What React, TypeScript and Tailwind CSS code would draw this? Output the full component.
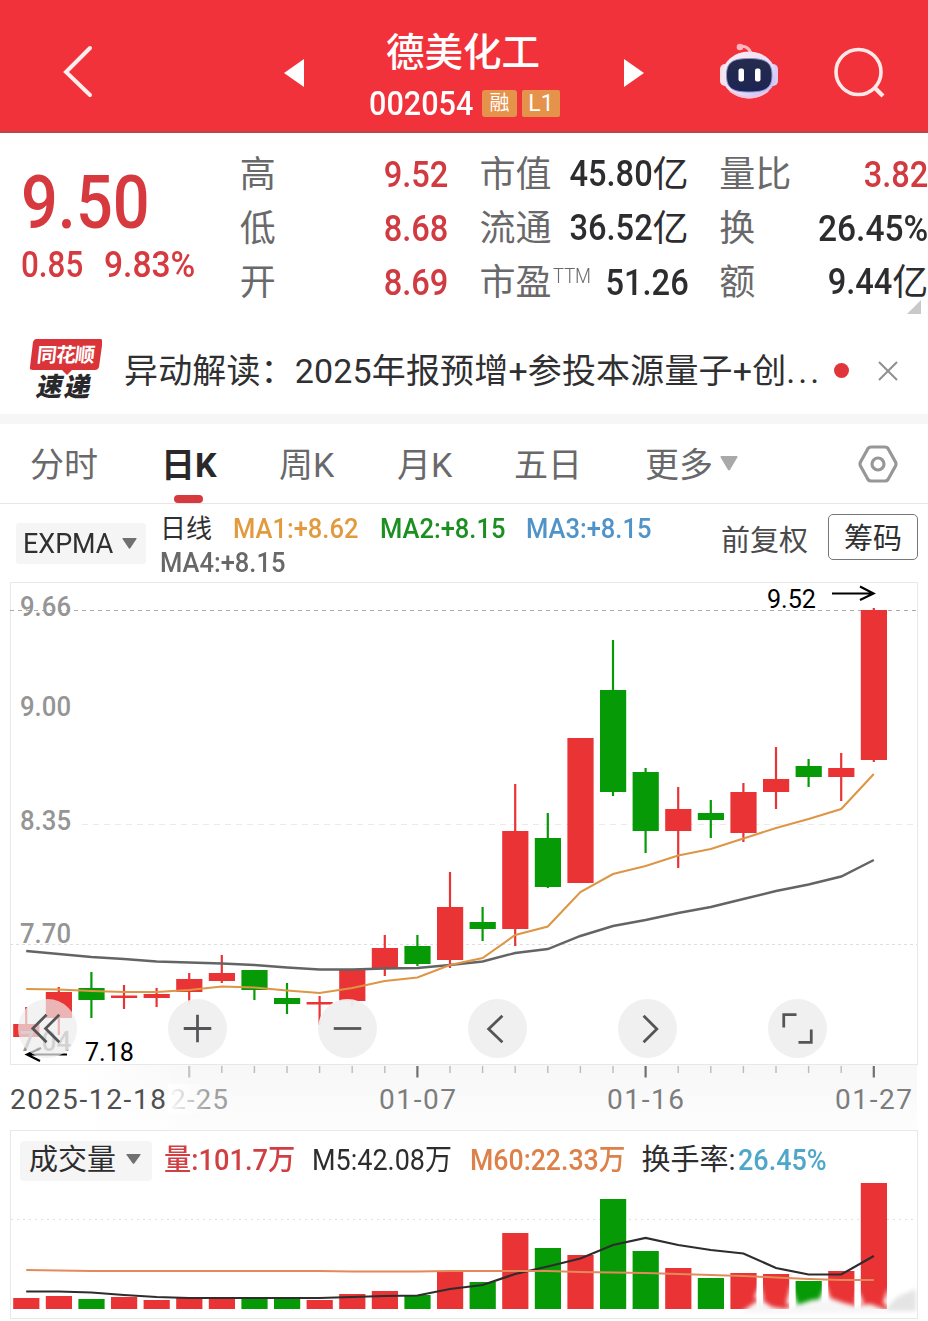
import type { ReactNode } from "react";

type Tone = "up" | "down";

// body and wick as [top, bottom], vol as the top of the volume bar
type Candle = {
  tone: Tone;
  body: [number, number];
  wick: [number, number];
  vol: number;
};

const UP = "#e93335";
const DOWN = "#069a06";
const STEP = 32.6;

const candles: Candle[] = [
  { tone: "up", body: [1024, 1037], wick: [1007, 1037], vol: 1298 },
  { tone: "up", body: [992, 1018], wick: [987, 1035], vol: 1296 },
  { tone: "down", body: [988, 1000], wick: [972, 1018], vol: 1299 },
  { tone: "up", body: [995.5, 998], wick: [985, 1009], vol: 1297 },
  { tone: "up", body: [994, 998], wick: [988, 1007], vol: 1300 },
  { tone: "up", body: [979, 992], wick: [973, 1004], vol: 1298 },
  { tone: "up", body: [973, 981], wick: [955, 983], vol: 1298 },
  { tone: "down", body: [970, 990], wick: [970, 1000], vol: 1298 },
  { tone: "down", body: [998, 1004], wick: [983, 1014], vol: 1298 },
  { tone: "up", body: [1002, 1004.5], wick: [996, 1025], vol: 1300 },
  { tone: "up", body: [969, 1001], wick: [969, 1006], vol: 1294 },
  { tone: "up", body: [948, 968], wick: [935, 976], vol: 1291 },
  { tone: "down", body: [946, 964], wick: [935, 966], vol: 1295 },
  { tone: "up", body: [907, 960], wick: [872, 968], vol: 1272 },
  { tone: "down", body: [922, 929], wick: [907, 941], vol: 1282 },
  { tone: "up", body: [831, 929], wick: [784, 946], vol: 1233 },
  { tone: "down", body: [838, 887], wick: [813, 888], vol: 1248 },
  { tone: "up", body: [738, 883], wick: [738, 883], vol: 1255 },
  { tone: "down", body: [690, 792], wick: [640, 796], vol: 1199 },
  { tone: "down", body: [772, 831], wick: [768, 853], vol: 1251 },
  { tone: "up", body: [809, 831], wick: [787, 868], vol: 1268 },
  { tone: "down", body: [813, 820], wick: [800, 838], vol: 1278 },
  { tone: "up", body: [792, 833], wick: [783, 842], vol: 1273 },
  { tone: "up", body: [779, 792], wick: [747, 809], vol: 1274 },
  { tone: "down", body: [766, 777], wick: [759, 787], vol: 1281 },
  { tone: "up", body: [768, 777], wick: [753, 801], vol: 1271 },
  { tone: "up", body: [610, 760], wick: [608, 762], vol: 1183 },
];

const ma1 = [
  989, 989.5, 991, 992, 992, 990, 986.5, 987.5, 990.5, 993, 988, 981, 977.5, 965,
  958, 935, 926.5, 892, 874, 866, 855.5, 849, 838.5, 828, 819, 809, 774,
];
const ma4 = [
  951, 954, 957, 959, 961.5, 962.5, 963.5, 965, 967.5, 969.5, 969.5, 968.5, 968,
  965, 961.5, 953, 949, 936, 926, 920, 913, 907, 899, 891, 884.5, 876.5, 860,
];
const volM5 = [
  1291.5, 1291.5, 1292.5, 1295, 1297, 1298, 1298, 1298, 1298, 1298, 1297, 1296,
  1295.5, 1289, 1285, 1274, 1266.5, 1258.5, 1245, 1238, 1245, 1250, 1253.5, 1268,
  1274.5, 1274.5, 1256,
];
const volM60 = [
  1270, 1270.5, 1271, 1271, 1271, 1271, 1271, 1271, 1271, 1271, 1271.5, 1271.5,
  1271.5, 1271, 1271, 1271, 1271, 1272, 1272.5, 1273, 1274, 1275, 1276, 1277.5,
  1279, 1280, 1280,
];

const cx = (i: number) => 26.2 + STEP * i;
const points = (ys: number[]) => ys.map((y, i) => `${cx(i)},${y}`).join(" ");

const quotes = [
  [
    { label: "高", value: "9.52", red: true },
    { label: "低", value: "8.68", red: true },
    { label: "开", value: "8.69", red: true },
  ],
  [
    { label: "市值", value: "45.80", unit: "亿" },
    { label: "流通", value: "36.52", unit: "亿" },
    { label: "市盈", sup: "TTM", value: "51.26" },
  ],
  [
    { label: "量比", value: "3.82", red: true },
    { label: "换", value: "26.45%" },
    { label: "额", value: "9.44", unit: "亿" },
  ],
] as { label: string; sup?: string; value: string; unit?: string; red?: boolean }[][];

const tabs = [
  { label: "分时", width: "w-[131px]" },
  { label: "日K", width: "w-[118px]", active: true },
  { label: "周K", width: "w-[118px]" },
  { label: "月K", width: "w-[117px]" },
  { label: "五日", width: "w-[131px]" },
];

const yLabels = [
  { text: "9.66", y: 616 },
  { text: "9.00", y: 716 },
  { text: "8.35", y: 830 },
  { text: "7.70", y: 943 },
  { text: "7.04", y: 1051 },
];

function Caret({ className }: { className: string }) {
  return (
    <svg viewBox="0 0 16 10" preserveAspectRatio="none" className={className}>
      <path d="M1 0H15Q16 0 15.4 1L8.8 9.4Q8 10 7.2 9.4L.6 1Q0 0 1 0Z" fill="currentColor" />
    </svg>
  );
}

function Header() {
  return (
    <header className="flex h-[133px] items-center border-b-2 border-[#b8474b] bg-[#f2323a] text-white">
      <svg viewBox="0 0 30 54" className="mt-[11px] ml-[63px] h-[54px] w-[30px]" fill="none" stroke="#ffeeed">
        <path d="M27 4 3 28 27 51" strokeWidth="4" strokeLinecap="round" />
      </svg>
      <svg viewBox="0 0 20 30" className="mt-[15px] ml-[191px] h-[30px] w-5">
        <path d="M20 1V29L0 15Z" fill="currentColor" />
      </svg>
      <div className="mt-[21px] ml-[65px] w-[192px]">
        <h1 className="ml-[17px] whitespace-nowrap text-[38.5px] leading-[54px] font-medium">德美化工</h1>
        <div className="flex h-[46px] items-center">
          <span className="w-[104px] origin-left scale-x-[.9] text-[34px] leading-none font-medium">002054</span>
          <span className="ml-[9px] flex h-[27px] w-[35px] items-center justify-center rounded-[3px] bg-[#e5924b] text-[20px] leading-none">
            融
          </span>
          <span className="ml-[5px] flex h-[27px] w-[38px] items-center justify-center rounded-[2px] bg-[#e5924b] text-[23px] leading-none">
            L1
          </span>
        </div>
      </div>
      <svg viewBox="0 0 20 30" className="mt-[15px] ml-[63px] h-[30px] w-5">
        <path d="M0 1V29L20 15Z" fill="currentColor" />
      </svg>
      <Robot />
      <svg viewBox="0 0 52 52" className="mt-[15px] ml-[55px] h-[52px] w-[52px]" fill="none" stroke="#ffe9e8">
        <circle cx="24.500" cy="25" r="22.5" strokeWidth="3.6" />
        <path d="m40 40 9 9" strokeWidth="4.2" />
      </svg>
    </header>
  );
}

function Robot() {
  return (
    <svg viewBox="0 0 60 58" className="mt-[11px] ml-[75px] h-[58px] w-[60px]">
      <defs>
        <linearGradient id="shell" x1="0" y1="0" x2="1" y2="1">
          <stop offset="0" stopColor="#ffeef0" />
          <stop offset=".6" stopColor="#e9dcf7" />
          <stop offset="1" stopColor="#b9b4f5" />
        </linearGradient>
        <linearGradient id="visor" x1="0" y1="0" x2="0" y2="1">
          <stop offset="0" stopColor="#262c4d" />
          <stop offset="1" stopColor="#1c2453" />
        </linearGradient>
      </defs>
      <path d="M20 4.500Q29 3 32 11" fill="none" stroke="#f9b9c0" strokeWidth="3" />
      <circle cx="21" cy="5" r="3.3" fill="#ffb5bb" />
      <rect x="1" y="22" width="10" height="22" rx="5" fill="#fbdfe6" />
      <rect x="49" y="22" width="10" height="22" rx="5" fill="#d8cdf6" />
      <ellipse cx="30" cy="33" rx="27" ry="23.5" fill="url(#shell)" />
      <path d="M11 49Q30 62 49 49" fill="none" stroke="#f6c3da" strokeWidth="2" />
      <path
        d="M30 16.500C46 16.500 53 20 53 33S47 50 30 50 7.500 46 7.500 33 14 16.500 30 16.500Z"
        fill="url(#visor)"
        stroke="#8b94cf"
      />
      <rect x="19.500" y="26.500" width="5.5" height="13" rx="2" fill="#fff" />
      <rect x="36" y="26.500" width="5.5" height="13" rx="2" fill="#fff" />
    </svg>
  );
}

function Quote() {
  return (
    <section className="relative flex h-[197px] text-[#2d2d2f]">
      <div className="w-[240px] pt-[32px] pl-[21px] font-medium text-[#d63a3f]">
        <div className="origin-left scale-x-[.865] text-[75px] leading-[75px]">9.50</div>
        <div className="flex text-[36.5px] leading-[49px]">
          <span className="w-[83px] origin-left scale-x-[.86]">0.85</span>
          <span className="origin-left scale-x-[.92]">9.83%</span>
        </div>
      </div>
      <div className="grid grid-cols-3 gap-x-[31px] pt-[14px]">
        {quotes.map((column, c) => (
          <div key={c} className="w-[209px]">
            {column.map((row) => (
              <div key={row.label} className="flex h-[54px] items-center justify-between whitespace-nowrap">
                <span className="flex pt-[2px] text-[36px] leading-[54px] text-[#69696b]">
                  {row.label}
                  {row.sup && (
                    <span className="ml-[1px] w-[37px] origin-left scale-x-[.92] text-[20px] leading-[40px] font-light">
                      {row.sup}
                    </span>
                  )}
                </span>
                <span className="flex">
                  <span
                    className={`origin-right text-[37.5px] leading-[54px] font-medium ${
                      row.red ? "text-[#d03a40]" : ""
                    } ${row.value.endsWith("%") ? "scale-x-[.895]" : "scale-x-[.87]"} ${row.sup ? "-ml-4" : ""}`}
                  >
                    {row.value}
                  </span>
                  {row.unit && <span className="pt-[2px] text-[36px] leading-[54px]">{row.unit}</span>}
                </span>
              </div>
            ))}
          </div>
        ))}
      </div>
      <svg viewBox="0 0 14 14" className="absolute right-[7px] bottom-4 h-3.5 w-3.5">
        <path d="M14 0V14H0Z" fill="#c9c9c9" />
      </svg>
    </section>
  );
}

function NewsBar() {
  return (
    <section className="flex h-[94px] items-center border-b-[10px] border-[#f6f6f6] pb-[3px]">
      <div className="ml-[29px] w-[75px] font-black">
        <div className="relative flex h-[31px] w-[73px] items-center justify-center">
          <svg viewBox="0 0 73 36" className="absolute top-0 left-0 h-9 w-[73px]">
            <path d="M7 0H71Q74 0 73.500 3L70 28Q69 31 66 31H43L38 36 33 31H4Q0 31 1 28L4 3Q5 0 7 0Z" fill="#da3439" />
          </svg>
          <span className="relative -skew-x-6 text-[20px] leading-none font-bold tracking-[-1px] text-white">同花顺</span>
        </div>
        <div className="mt-[3px] ml-2 flex gap-[2px] text-[26px] leading-[29px] text-[#29292b]">
          <span className="-skew-x-12">速</span>
          <span className="-skew-x-12">递</span>
        </div>
      </div>
      <p className="ml-5 w-[700px] whitespace-nowrap pt-px text-[34px] leading-[50px] tracking-[.15px] text-[#303032]">
        异动解读：2025年报预增+参投本源量子+创<span className="tracking-[3px]">...</span>
      </p>
      <span className="ml-[10px] h-[15px] w-[15px] rounded-full bg-[#e0353a]" />
      <svg viewBox="0 0 20 20" className="ml-[29px] h-5 w-5" stroke="#8f8f8f" strokeWidth="2">
        <path d="m1 1 18 18M19 1 1 19" />
      </svg>
    </section>
  );
}

function PeriodTabs() {
  return (
    <nav className="flex h-[80px] items-center border-b border-[#e6e6e6] pl-[30px] text-[34px] text-[#69696b]">
      {tabs.map((tab) => (
        <div key={tab.label} className={`relative flex h-full items-center whitespace-nowrap pt-[3px] ${tab.width}`}>
          <span className={tab.active ? "text-[#29292b] font-bold" : ""}>{tab.label}</span>
          {tab.active && (
            <span className="absolute bottom-0 left-[13px] h-2 w-[29px] rounded-full bg-[#d63a3f]" />
          )}
        </div>
      ))}
      <span className="whitespace-nowrap pt-[3px]">更多</span>
      <Caret className="ml-[7px] h-[15px] w-[18px] text-[#a9a9a9]" />
      <svg viewBox="0 0 40 38" className="ml-[120px] h-[38px] w-10" fill="none" stroke="#979797" strokeWidth="3.2">
        <path d="M13 2H27Q29 2 30 3.500L37.500 17Q38.500 19 37.500 21L30 34.500Q29 36 27 36H13Q11 36 10 34.500L2.500 21Q1.500 19 2.500 17L10 3.500Q11 2 13 2Z" />
        <circle cx="20" cy="19" r="6" />
      </svg>
    </nav>
  );
}

function Average({ color, children }: { color: string; children: ReactNode }) {
  return (
    <span
      className={`w-[146.5px] shrink-0 origin-left scale-x-[.945] whitespace-nowrap text-[27px] font-medium ${color}`}
    >
      {children}
    </span>
  );
}

function IndicatorBar() {
  return (
    <section className="flex h-[78px] items-start pl-4 text-[#303032]">
      <div className="mt-[19px] flex h-[41px] w-[130px] items-center rounded-[3px] bg-[#f5f5f5] pl-[7px]">
        <span className="w-[99px] origin-left scale-x-[.96] pt-px text-[28px]">EXPMA</span>
        <Caret className="-mt-px h-[11px] w-[15px] text-[#707070]" />
      </div>
      <div className="ml-[14px] w-[561px] pt-[8px] leading-[34px]">
        <div className="flex h-[34px]">
          <span className="w-[73px] shrink-0 text-[26px]">日线</span>
          <Average color="text-[#e29a3f]">MA1:+8.62</Average>
          <Average color="text-[#1b8f1f]">MA2:+8.15</Average>
          <Average color="text-[#4f93c9]">MA3:+8.15</Average>
        </div>
        <div className="flex h-[34px]">
          <Average color="text-[#68686a]">MA4:+8.15</Average>
        </div>
      </div>
      <span className="mt-[15px] w-[107px] whitespace-nowrap text-[29px] leading-[44px] text-[#4a4a4c]">前复权</span>
      <button className="mt-[10px] flex h-[46px] w-[90px] items-center justify-center rounded-[5px] border border-[#77777a] pt-[5px] text-[29px] leading-none">
        筹码
      </button>
    </section>
  );
}

function RoundButton({ d, faded }: { d: string; faded?: boolean }) {
  return (
    <button
      className={`flex h-[59px] w-[59px] items-center justify-center rounded-full ${
        faded ? "bg-[#ededed]/70" : "bg-[#efefef]/95"
      }`}
    >
      <svg viewBox="0 0 60 60" className="h-[59px] w-[59px]" fill="none" stroke="#555558" strokeWidth="2.8">
        <path d={d} />
      </svg>
    </button>
  );
}

function PriceChart() {
  return (
    <section className="relative h-[548px]">
      <svg viewBox="0 582 928 548" className="block h-[548px] w-full">
        <defs>
          <linearGradient id="axis" x1="0" y1="0" x2="0" y2="1">
            <stop offset="0" stopColor="#f7f7f7" />
            <stop offset=".5" stopColor="#fafafa" />
            <stop offset="1" stopColor="#fdfdfd" />
          </linearGradient>
          <linearGradient id="fade" x1="0" y1="0" x2="1" y2="0">
            <stop offset="0" stopColor="#fff" />
            <stop offset="1" stopColor="#fff" stopOpacity="0" />
          </linearGradient>
        </defs>
        <rect x="80" y="1065" width="837" height="65" fill="url(#axis)" />
        <rect x="80" y="1064" width="120" height="66" fill="url(#fade)" />
        <rect x="10.500" y="582.500" width="907" height="482" fill="none" stroke="#e8e8e8" />
        <path d="M10 944.500H917" stroke="#dedede" strokeDasharray="3 3" />
        <path d="M82 824.500H917" stroke="#eaeaea" strokeDasharray="6 5" />

        {candles.map((c, i) => (
          <g key={i} fill={c.tone === "up" ? UP : DOWN}>
            <rect x={cx(i) - 1.1} y={c.wick[0]} width="2.2" height={c.wick[1] - c.wick[0]} />
            <rect x={cx(i) - 13} y={c.body[0]} width="26.200" height={c.body[1] - c.body[0]} />
          </g>
        ))}
        <path d="M10 610.500H861M888 610.500H917" stroke="#b1a9a1" strokeDasharray="4 4" />
        <polyline points={points(ma4)} fill="none" stroke="#646464" strokeWidth="2.4" />
        <polyline points={points(ma1)} fill="none" stroke="#dd9645" strokeWidth="2.1" />

        <g fontSize="28" fontWeight="500" fill="#959595">
          {yLabels.map((l) => (
            <text key={l.text} x="20" y={l.y} textLength="51" lengthAdjust="spacingAndGlyphs">
              {l.text}
            </text>
          ))}
        </g>

        <g fontSize="26" fill="#000">
          <text x="767" y="608" textLength="49" lengthAdjust="spacingAndGlyphs">9.52</text>
          <text x="85" y="1061" textLength="49" lengthAdjust="spacingAndGlyphs">7.18</text>
        </g>
        <g fill="none" stroke="#000" strokeWidth="2.200">
          <path d="M832 593.500H873M860 586.500 873.500 593.500 860 600" />
          <path d="M67 1054.500H27M41 1048 27 1054.500 40 1061" />
        </g>

        {candles.slice(5).map((_, n) => {
          const i = n + 5;
          const major = i === 5 || i === 12 || i === 19 || i === 26;
          return (
            <path
              key={i}
              d={`M${cx(i)} 1066V${major ? 1077.5 : 1073}`}
              stroke={i === 5 ? "#c4c4c4" : major ? "#707070" : "#bbb"}
              strokeWidth={major ? 2.2 : 1.4}
            />
          );
        })}
        <g fontSize="28" fill="#7d7d7d">
          <text x="170" y="1109" textLength="58" fill="#a0a0a0">2-25</text>
          <rect x="168" y="1084" width="40" height="30" fill="url(#fade)" />
          <text x="10" y="1109" textLength="156" fill="#505050">2025-12-18</text>
          <text x="379" y="1109" textLength="77">01-07</text>
          <text x="607" y="1109" textLength="77">01-16</text>
          <text x="835" y="1109" textLength="77">01-27</text>
        </g>
      </svg>

      {/* zoom and pan controls floating over the candles */}
      <div className="absolute top-[417px] left-[17.5px] flex gap-[91px]">
        <RoundButton faded d="M29 16 15 30 29 44M42 16 28 30 42 44" />
        <RoundButton d="M30 16V44M16 30H44" />
        <RoundButton d="M16 30H44" />
        <RoundButton d="M35 17 21 30.500 35 44" />
        <RoundButton d="M26 17 39.500 30.500 26 44" />
        <RoundButton d="M16 29V16H29M44 31V44H31" />
      </div>
    </section>
  );
}

function VolumePanel() {
  return (
    <section className="relative mx-[10px] h-[189px] w-[908px] border border-[#e8e8e8]">
      <div className="relative z-10 flex h-[58px] items-center whitespace-nowrap pt-px pl-[9px] text-[29px] text-[#2d2d2f]">
        <div className="flex h-[40px] w-[132px] items-center rounded-[4px] bg-[#f5f5f5] pl-[9px]">
          <span className="w-[97px]">成交量</span>
          <Caret className="-mt-1 h-[10px] w-[15px] text-[#707070]" />
        </div>
        <span className="ml-[12px] w-[147.500px] origin-left scale-x-[.94] font-medium text-[#d03f42]">量:101.7万</span>
        <span className="w-[158px] origin-left scale-x-[.93]">M5:42.08万</span>
        <span className="w-[172px] origin-left scale-x-[.92] font-medium text-[#dd8049]">M60:22.33万</span>
        <span className="w-[96px]">换手率:</span>
        <span className="origin-left scale-x-[.93] font-medium text-[#4fa6cb]">26.45%</span>
      </div>
      <svg viewBox="11 1131 906 187" className="absolute top-0 left-0 h-[187px] w-[906px]">
        <defs>
          <filter id="soft" x="-20%" y="-50%" width="140%" height="200%">
            <feGaussianBlur stdDeviation="2.2" />
          </filter>
        </defs>
        <path d="M11 1219.500H917" stroke="#e1e1e1" strokeDasharray="2 4" />
        {candles.map((c, i) => (
          <rect
            key={i}
            x={cx(i) - 13}
            y={c.vol}
            width="26.200"
            height={1309 - c.vol}
            fill={c.tone === "up" ? UP : DOWN}
          />
        ))}
        {/* brushed haze over the last bars */}
        <g filter="url(#soft)">
          <path
            d="M740 1313 750 1306 760 1299 772 1307 784 1309 797 1305 812 1300 830 1298 844 1303 856 1306 870 1304 884 1309V1313Z"
            fill="#f6f6f6"
          />
          <path d="M760 1284 764 1300 754 1298ZM791 1284 798 1306 786 1304ZM826 1284 831 1301 819 1300ZM858 1290 864 1304 855 1303ZM888 1288 891 1308 883 1303Z" fill="#fff" />
          <path d="M884 1311 897 1297 916 1289V1311Z" fill="#e4e4e4" />
        </g>
        <polyline points={points(volM5)} fill="none" stroke="#2e2c2c" strokeWidth="2.200" />
        <polyline points={points(volM60)} fill="none" stroke="#e28a5a" strokeWidth="2" />
      </svg>
    </section>
  );
}

export default function App() {
  return (
    <main className="h-[1321px] w-[928px] overflow-hidden bg-white [font-family:Roboto,'Noto_Sans_CJK_SC',sans-serif]">
      <Header />
      <Quote />
      <NewsBar />
      <PeriodTabs />
      <IndicatorBar />
      <PriceChart />
      <VolumePanel />
    </main>
  );
}
